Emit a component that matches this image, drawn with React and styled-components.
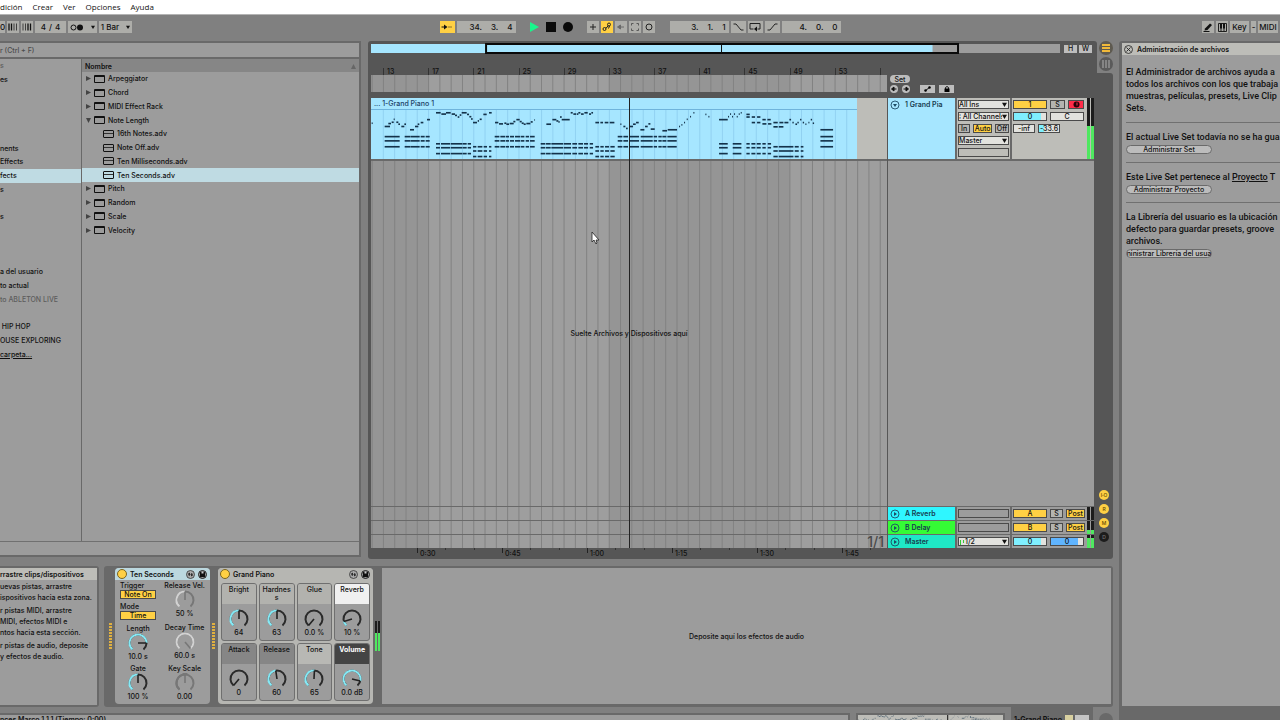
import React, { useState } from "react";
import styled, { createGlobalStyle, css } from "styled-components";

const GlobalStyle = createGlobalStyle`
  * {
    box-sizing: border-box;
  }
  html, body, #root {
    height: 100%;
  }
  body {
    margin: 0;
    overflow: hidden;
    background: #808080;
    color: #111;
    font-family: Inter, "Liberation Sans", sans-serif;
    font-size: 7px;
    font-weight: 500;
  }
  button, input, select {
    font: inherit;
    color: inherit;
    margin: 0;
    padding: 0;
    border: 0;
    border-radius: 0;
    background: none;
  }
  svg {
    display: block;
    flex: none;
  }
`;

const PANEL = "#9c9c9c";
const EDGE = "#696969";
const DARK = "#565656";
const LIGHT = "#bdbdb8";
const YELLOW = "#ffd044";
const BLUE = "#a6e6ff";
const CYAN = "#7fefff";
const WHITE = "#e2e2de";

/* ---------- timeline scale ---------- */

const VIEW_START = 11.9;
const VIEW_BARS = 45.7;
const pos = (bar) => ((bar - VIEW_START) / VIEW_BARS) * 100;
const PLAYHEAD = 34.75;

/* ---------- shell ---------- */

const Shell = styled.div`
  height: 100vh;
  display: flex;
  flex-direction: column;
`;

const Menu = styled.nav`
  height: 15px;
  flex: none;
  display: flex;
  align-items: center;
  gap: 10px;
  padding-bottom: 1px;
  background: #fff;
  border-bottom: 1px solid #b4b4b4;
  font-family: "Open Sans", "Noto Sans", sans-serif;
  font-size: 8px;
  font-weight: 400;
`;

const Body = styled.div`
  flex: 1;
  min-height: 0;
  display: flex;
`;

const Work = styled.main`
  flex: 1;
  min-width: 0;
  display: flex;
  flex-direction: column;
`;

const Upper = styled.div`
  flex: 1;
  min-height: 0;
  display: flex;
  gap: 7px;
  padding-right: 6px;
`;

/* ---------- toolbar ---------- */

const Toolbar = styled.header`
  height: 26px;
  flex: none;
  display: grid;
  grid-template-columns: 1fr auto 1fr;
  align-items: center;
  padding-bottom: 2px;
`;

const Tools = styled.div`
  display: flex;
  gap: 2px;
  justify-content: ${(props) => (props.$end ? "flex-end" : "flex-start")};
`;

const Tool = styled.button`
  width: ${(props) => props.$w || 12}px;
  height: 12px;
  display: flex;
  align-items: center;
  justify-content: center;
  gap: 3px;
  white-space: nowrap;
  font-size: 8px;
  background: ${(props) => (props.$on ? YELLOW : props.$bare ? "none" : "#adada9")};
`;

const Counter = styled.output`
  width: 59px;
  height: 12px;
  display: flex;
  align-items: center;
  justify-content: flex-end;
  gap: 9px;
  padding-right: 3px;
  font-size: 8px;
  background: #adada9;
`;

const Spacer = styled.span`
  width: ${(props) => props.$w}px;
`;

/* ---------- browser ---------- */

const Browser = styled.section`
  width: 361px;
  flex: none;
  margin-bottom: 2px;
  display: flex;
  flex-direction: column;
  background: ${PANEL};
  border: 2px solid ${EDGE};
  border-left: 0;
`;

const Search = styled.input`
  width: 100%;
  height: 14px;
  font-size: 7px;
  color: #555;
  &::placeholder {
    color: #4c4c4c;
    opacity: 1;
  }
`;

const BrowserBody = styled.div`
  flex: 1;
  display: flex;
  border-top: 2px solid ${EDGE};
`;

const BrowserFoot = styled.div`
  height: 14px;
  border-top: 1px solid #707070;
`;

const Places = styled.ul`
  width: 81px;
  height: 302px;
  margin: 0;
  padding: 0;
  display: grid;
  grid-template-rows: repeat(22, 1fr);
  list-style: none;
`;

const Place = styled.li`
  display: flex;
  align-items: center;
  white-space: nowrap;
  color: ${(props) => (props.$dim ? "#5c5c5c" : "#111")};
  background: ${(props) => (props.$on ? "#bfdbe3" : "none")};
  text-decoration: ${(props) => (props.$link ? "underline" : "none")};
`;

const Files = styled.div`
  flex: 1;
  border-left: 1px solid ${EDGE};
`;

const FilesHead = styled.div`
  height: 13px;
  padding: 1px 3px 0;
  display: flex;
  align-items: center;
  justify-content: space-between;
  font-weight: 600;
  background: #868686;
`;

const FileList = styled.ul`
  height: 165px;
  margin: 0;
  padding: 0;
  display: grid;
  grid-template-rows: repeat(12, 1fr);
  list-style: none;
`;

const FileRow = styled.li`
  display: flex;
  align-items: center;
  gap: 3px;
  padding-left: ${(props) => (props.$child ? 21 : 4)}px;
  background: ${(props) => (props.$on ? "#bfdbe3" : "none")};
`;

const FileIcon = styled.span`
  width: 11px;
  height: 8px;
  border: 1px solid #111;
  border-top-width: ${(props) => (props.$child ? 1 : 2)}px;
  border-radius: 1px;
  ${(props) =>
    props.$child &&
    css`
      &::after {
        content: "";
        display: block;
        height: 2px;
        border-bottom: 1px solid #333;
      }
    `}
`;

/* ---------- arrangement ---------- */

const Arrange = styled.section`
  flex: 1;
  min-width: 0;
  display: flex;
`;

const ArrMain = styled.div`
  flex: 1;
  min-width: 0;
  padding: 2px 3px 0;
  display: flex;
  flex-direction: column;
  background: ${DARK};
  border-radius: 3px 3px 0 3px;
`;

const OverviewRow = styled.div`
  height: 11px;
  display: flex;
  align-items: center;
  gap: 2px;
  padding-right: 2px;
`;

const Overview = styled.div`
  flex: 1;
  height: 11px;
  margin-right: 2px;
`;

const SmallBtn = styled.button`
  width: ${(props) => props.$w || 13}px;
  height: 8px;
  display: flex;
  align-items: center;
  justify-content: center;
  font-size: 7px;
  background: #bdbdbd;
`;

const Split = styled.div`
  display: flex;
  flex: ${(props) => (props.$grow ? 1 : "none")};
  min-height: 0;
`;

const TimeCol = styled.div`
  flex: 1;
  min-width: 0;
  position: relative;
  display: flex;
  flex-direction: column;
`;

const HeadCol = styled.div`
  width: 207px;
  flex: none;
  display: flex;
  flex-direction: column;
  border-left: 1px solid ${DARK};
`;

const Ruler = styled.div`
  height: 21px;
  display: flex;
  align-items: flex-end;
  overflow: hidden;
  padding-left: 12px;
`;

const Mark = styled.span`
  flex: none;
  height: 7px;
  padding-left: 3px;
  border-left: 1px solid #333;
  line-height: 7px;
`;

const Scrub = styled.div`
  position: relative;
  height: 17px;
  margin-bottom: 6px;
  background: ${PANEL};
`;

const SetTools = styled.div`
  height: 44px;
  padding: 21px 2px 0;
  display: flex;
  flex-direction: column;
  align-items: flex-start;
  gap: 2px;
`;

const Pill = styled.button`
  width: ${(props) => props.$w}px;
  height: ${(props) => props.$h || 9}px;
  display: flex;
  align-items: center;
  justify-content: center;
  overflow: hidden;
  white-space: nowrap;
  font-family: Inter, "Liberation Sans", sans-serif;
  font-size: 7px;
  border-radius: 5px;
  border: ${(props) => (props.$line ? "1px solid #6a6a6a" : 0)};
  background: #bcbcbc;
`;

const SetRow = styled.div`
  display: flex;
  gap: 4px;
`;

const Round = styled.button`
  width: 8px;
  height: 8px;
  border-radius: 50%;
  background: #bdbdbd;
`;

const GridBack = styled.svg`
  position: absolute;
  inset: 0;
  width: 100%;
  height: 100%;
`;

const Playhead = styled.span`
  position: absolute;
  top: 0;
  bottom: 0;
  width: 1px;
  background: #222;
`;

const Pointer = styled.svg`
  position: absolute;
  top: 133px;
`;

const TrackLane = styled.div`
  position: relative;
  height: 63px;
  flex: none;
  display: flex;
  background: ${LIGHT};
  border-bottom: 2px solid ${EDGE};
`;

const Clip = styled.article`
  display: flex;
  flex-direction: column;
  background: ${BLUE};
`;

const ClipName = styled.div`
  height: 12px;
  flex: none;
  padding-left: 3px;
  line-height: 12px;
  color: #203e66;
  border-bottom: 1px solid #6fb4dc;
`;

const ClipNotes = styled.svg`
  width: 100%;
  height: 49px;
`;

const DropLane = styled.div`
  position: relative;
  flex: 1;
  display: flex;
  align-items: center;
  justify-content: center;
`;

const ReturnLane = styled.div`
  position: relative;
  height: 14px;
  flex: none;
  display: flex;
  align-items: center;
  justify-content: flex-end;
  padding-right: 3px;
  border-top: 1px solid ${EDGE};
  font-size: 14px;
  line-height: 12px;
  font-weight: 500;
  color: #4a4a4a;
`;

const Times = styled.div`
  height: 11px;
  display: flex;
  padding-left: 46px;
  overflow: hidden;
`;

const TimeMark = styled.span`
  flex: none;
  height: 5px;
  padding-left: 2px;
  line-height: 12px;
  border-left: 1px solid #222;
  background:
    linear-gradient(#333, #333) 33% 0 / 1px 2px no-repeat,
    linear-gradient(#333, #333) 67% 0 / 1px 2px no-repeat;
`;

const TrackRow = styled.div`
  height: ${(props) => (props.$tall ? 63 : 14)}px;
  flex: none;
  display: grid;
  grid-template-columns: 67px 53px 1fr;
  column-gap: 2px;
  background: ${EDGE};
  border-bottom: ${(props) => (props.$tall ? `2px solid ${EDGE}` : 0)};
  border-top: ${(props) => (props.$tall ? 0 : `1px solid ${EDGE}`)};
`;

const TrackName = styled.div`
  display: flex;
  align-items: ${(props) => (props.$top ? "flex-start" : "center")};
  gap: 5px;
  padding: ${(props) => (props.$top ? 2 : 0)}px 2px;
  line-height: 9px;
  font-weight: 600;
  white-space: nowrap;
  color: #173c50;
  background: ${(props) => props.$bg};
`;

const Cells = styled.div`
  display: flex;
  flex-direction: column;
  gap: 3px;
  padding: 2px 1px;
  background: ${(props) => (props.$tall ? LIGHT : PANEL)};
`;

const CellRow = styled.div`
  display: flex;
  gap: 3px;
`;

const cell = css`
  height: 9px;
  display: flex;
  align-items: center;
  justify-content: center;
  border: 1px solid #4a4a4a;
  font-size: 7px;
  line-height: 7px;
`;

const Cell = styled.button`
  ${cell}
  width: ${(props) => props.$w}px;
  background: ${(props) => props.$bg || "#b4b4b0"};
`;

const Field = styled.input`
  ${cell}
  width: ${(props) => props.$w}px;
  text-align: center;
  background: ${(props) =>
    props.$fill ? `linear-gradient(to right, ${props.$tint || CYAN} ${props.$fill}%, ${WHITE} 0)` : WHITE};
`;

const Blank = styled.span`
  ${cell}
`;

const Chooser = styled.label`
  ${cell}
  padding-right: 1px;
  background: ${WHITE};
  select {
    flex: 1;
    min-width: 0;
    appearance: none;
    outline: 0;
  }
`;

const Mixer = styled.div`
  display: flex;
  justify-content: space-between;
  background: ${(props) => (props.$tall ? LIGHT : PANEL)};
`;

const Meter = styled.span`
  width: 7px;
  display: flex;
  gap: 1px;
  i {
    flex: 1;
    background: linear-gradient(to top, #4fe860 ${(props) => props.$level}%, #1c1c1c 0);
  }
`;

const RackMeter = styled(Meter)`
  width: 5px;
  height: 30px;
  align-self: center;
`;

const HeadFill = styled.div`
  flex: 1;
  background: ${PANEL};
`;

const Side = styled.div`
  width: 16px;
  flex: none;
  display: flex;
  flex-direction: column;
`;

const SideTop = styled.div`
  height: 32px;
  display: flex;
  flex-direction: column;
  align-items: center;
  gap: 2px;
  padding-left: 2px;
`;

const SideRest = styled.div`
  flex: 1;
  display: flex;
  flex-direction: column;
  justify-content: flex-end;
  gap: 4px;
  padding: 0 2px 17px;
  background: ${DARK};
  border-radius: 0 3px 3px 0;
`;

const Dot = styled.button`
  width: 10px;
  height: 10px;
  font-size: 5px;
  line-height: 10px;
  border-radius: 50%;
  color: ${(props) => (props.$off ? "#777" : "#5f4700")};
  background: ${(props) => (props.$off ? "#1c1c1c" : YELLOW)};
`;

/* ---------- help panel ---------- */

const Help = styled.aside`
  width: 161px;
  flex: none;
  display: flex;
  flex-direction: column;
  background: ${EDGE};
  padding: 2px 0 14px 3px;
  border-radius: 3px 0 0 0;
`;

const HelpHead = styled.div`
  height: 12px;
  flex: none;
  display: flex;
  align-items: center;
  gap: 4px;
  padding-left: 2px;
  font-weight: 600;
  background: ${LIGHT};
`;

const HelpBody = styled.div`
  flex: 1;
  padding: 11px 0 0 4px;
  overflow: hidden;
  background: ${PANEL};
`;

const HelpBlock = styled.div`
  padding-bottom: 8px;
  margin-bottom: 8px;
  border-bottom: ${(props) => (props.$last ? 0 : "1px solid #707070")};
  font-family: Roboto, "Liberation Sans", sans-serif;
  font-size: 9px;
  line-height: 12px;
  white-space: nowrap;
  a {
    color: inherit;
  }
  button {
    margin-top: 2px;
  }
`;

/* ---------- devices ---------- */

const Lower = styled.div`
  height: 141px;
  flex: none;
  margin-top: 7px;
  padding-right: 6px;
  display: flex;
  gap: 5px;
`;

const Info = styled.section`
  width: 99px;
  flex: none;
  border: 2px solid ${EDGE};
  border-left: 0;
  border-radius: 0 3px 3px 0;
  background: ${PANEL};
  white-space: nowrap;
  h2 {
    margin: 0 0 1px;
    height: 12px;
    font-size: 7px;
    line-height: 13px;
    font-weight: 600;
    background: ${LIGHT};
  }
  p {
    margin: 0 0 2px;
    line-height: 11px;
  }
`;

const Chain = styled.section`
  flex: 1;
  min-width: 0;
  display: flex;
  align-items: stretch;
  gap: 2px;
  padding: 2px 2px 3px 5px;
  border-radius: 3px;
  background: ${EDGE};
`;

const Dots = styled.span`
  width: 4px;
  height: 26px;
  align-self: center;
  border: 0 solid ${EDGE};
  border-right-width: 1px;
  background: repeating-linear-gradient(to bottom, #e0b040 0 2px, ${EDGE} 2px 3px);
`;

const Device = styled.article`
  width: ${(props) => props.$w}px;
  flex: none;
  display: flex;
  flex-direction: column;
  border-radius: 4px;
  overflow: hidden;
  background: ${(props) => (props.$rack ? "#b6b6b2" : PANEL)};
`;

const DeviceHead = styled.div`
  height: 12px;
  flex: none;
  display: flex;
  align-items: center;
  gap: 3px;
  padding: 0 3px 0 2px;
  font-weight: 600;
  background: ${(props) => props.$bg};
  b {
    flex: 1;
    font-weight: 600;
  }
`;

const Power = styled.button`
  width: 10px;
  height: 10px;
  border-radius: 50%;
  border: 1px solid #7a6520;
  background: ${YELLOW};
`;

const DeviceBody = styled.div`
  flex: 1;
  display: flex;
  justify-content: space-between;
  padding: 2px 5px 3px 5px;
`;

const ParamCol = styled.div`
  display: flex;
  flex-direction: column;
  align-items: center;
  justify-content: space-between;
`;

const Switch = styled.div`
  width: 36px;
  line-height: 8px;
`;

const KnobBox = styled.label`
  position: relative;
  display: flex;
  flex-direction: column;
  align-items: center;
  line-height: 8px;
  white-space: nowrap;
  input {
    position: absolute;
    inset: 0;
    width: 100%;
    opacity: 0;
  }
`;

const Macros = styled.div`
  flex: 1;
  display: grid;
  grid-template-columns: repeat(4, 1fr);
  grid-template-rows: 1fr 1fr;
  gap: 2px;
  padding: 3px;
`;

const Macro = styled.div`
  display: flex;
  flex-direction: column;
  overflow: hidden;
  border: 1px solid #6f6f6f;
  border-radius: 3px;
  background: ${PANEL};
`;

const MacroName = styled.div`
  height: 20px;
  padding: 2px 2px 0;
  line-height: 8px;
  text-align: center;
  word-break: break-all;
  color: ${(props) => props.$fg || "#111"};
  font-weight: ${(props) => (props.$fg ? 700 : 500)};
  background: ${(props) => props.$bg};
`;

const MacroKnob = styled.div`
  flex: 1;
  display: flex;
  align-items: flex-end;
  justify-content: center;
  padding-bottom: 3px;
`;

const DropZone = styled.div`
  flex: 1;
  display: flex;
  align-items: center;
  justify-content: center;
  background: ${PANEL};
`;

/* ---------- status bar ---------- */

const Status = styled.footer`
  height: 13px;
  flex: none;
  display: flex;
  gap: 6px;
  overflow: hidden;
`;

const StatusText = styled.div`
  flex: 1;
  height: 20px;
  margin-top: 6px;
  font-weight: 600;
  line-height: 10px;
  border: 2px solid ${EDGE};
  border-left: 0;
  background: ${PANEL};
`;

const MiniClip = styled.svg`
  width: 149px;
  height: 20px;
  margin-top: 6px;
  border: 2px solid ${EDGE};
  background: ${LIGHT};
`;

const MiniTab = styled.div`
  width: 82px;
  height: 20px;
  padding: 8px 4px 0 3px;
  display: flex;
  align-items: flex-start;
  justify-content: space-between;
  font-size: 7px;
  font-weight: 700;
  white-space: nowrap;
  background: ${EDGE};
`;

const MiniRound = styled.span`
  width: 14px;
  height: 14px;
  margin: 6px 6px 0 0;
  border-radius: 50%;
  background: ${EDGE};
`;

/* ---------- data ---------- */

const places = [
  ["s", 1, { dim: true }],
  ["es", 2],
  ["nents", 7],
  ["Effects", 8],
  ["fects", 9, { on: true }],
  ["s", 10],
  ["s", 12],
  ["a del usuario", 16],
  ["to actual", 17],
  ["to ABLETON LIVE", 18, { dim: true }],
  ["\u00a0HIP HOP", 20],
  ["OUSE EXPLORING", 21],
  ["carpeta...", 22, { link: true }],
];

const files = [
  { name: "Arpeggiator" },
  { name: "Chord" },
  { name: "MIDI Effect Rack" },
  { name: "Note Length", open: true },
  { name: "16th Notes.adv", child: true },
  { name: "Note Off.adv", child: true },
  { name: "Ten Milliseconds.adv", child: true },
  { name: "Ten Seconds.adv", child: true, on: true },
  { name: "Pitch" },
  { name: "Random" },
  { name: "Scale" },
  { name: "Velocity" },
];

// single notes: x, y, length
const melody = [
  [20, 370, 3], [59, 380, 16], [70, 371, 8], [80, 367, 6], [86, 358, 3], [94, 367, 6], [100, 373, 5],
  [109, 380, 9], [118, 373, 5], [135, 390, 12], [150, 380, 10], [158, 373, 5], [167, 368, 8], [186, 359, 9],
  [213, 338, 14], [229, 342, 14], [243, 338, 14], [260, 342, 10], [270, 346, 6], [278, 351, 5], [284, 345, 5],
  [290, 338, 15], [306, 343, 6], [313, 350, 6], [318, 357, 5], [324, 368, 12], [338, 363, 4], [344, 358, 6],
  [355, 343, 10], [372, 338, 8], [390, 368, 10], [402, 372, 12], [418, 370, 6], [424, 373, 8], [434, 371, 12],
  [445, 365, 6], [454, 359, 10], [464, 365, 6], [470, 370, 6], [476, 373, 6], [484, 371, 12], [497, 366, 6],
  [508, 360, 2], [544, 373, 14], [562, 359, 12], [574, 363, 6], [580, 366, 4], [585, 351, 5], [590, 359, 24],
  [617, 338, 6], [625, 342, 8], [635, 342, 5], [640, 338, 6], [648, 342, 8], [658, 338, 10], [672, 342, 6],
  [679, 338, 5], [691, 368, 11], [706, 368, 8], [719, 368, 11], [734, 368, 14], [766, 373, 3], [775, 380, 6],
  [783, 386, 5], [792, 380, 12], [804, 373, 8], [813, 368, 8], [826, 390, 12], [840, 380, 8], [850, 372, 6],
  [857, 388, 12], [892, 393, 14], [908, 390, 28], [942, 380, 3], [949, 375, 3], [957, 368, 3], [965, 358, 3],
  [975, 350, 3], [985, 338, 3], [1021, 343, 3], [1030, 350, 3], [1062, 359, 26], [1089, 350, 3], [1095, 342, 3],
  [1101, 350, 3], [1107, 342, 3], [1115, 350, 3], [1121, 342, 3], [1127, 338, 3], [1144, 343, 10], [1144, 351, 10],
  [1160, 351, 10], [1176, 351, 10], [1160, 368, 10], [1176, 368, 10], [1192, 359, 10], [1207, 359, 10],
  [1192, 372, 12], [1209, 372, 10], [1225, 368, 13], [1243, 368, 12], [1258, 368, 12], [1225, 381, 13],
  [1241, 381, 14], [1273, 359, 5], [1282, 368, 4], [1291, 373, 5], [1297, 368, 4], [1305, 359, 4], [1313, 368, 4],
  [1321, 373, 3], [1330, 368, 3], [1337, 359, 4], [1343, 370, 4],
];

// stacked notes: rows of y, then x and length
const chords = [
  [[411, 424, 442], [[59, 45], [119, 16], [136, 28], [167, 12], [182, 12], [389, 14], [406, 14], [422, 10],
    [435, 12], [450, 16], [468, 10], [482, 10], [495, 14], [758, 14], [775, 14], [792, 30], [827, 36], [866, 10],
    [880, 10], [892, 12], [907, 28]]],
  [[433, 445, 463], [[213, 12], [228, 28], [258, 34], [293, 12], [308, 10], [527, 14], [543, 14], [559, 35],
    [596, 22], [622, 14], [640, 14], [657, 12], [674, 10], [1062, 26], [1103, 26], [1144, 10], [1159, 12],
    [1175, 12], [1192, 10], [1208, 10]]],
  [[442, 455, 472], [[324, 10], [338, 14], [356, 10], [372, 7], [691, 11], [706, 10], [720, 12], [736, 13],
    [1225, 13], [1241, 44], [1289, 12], [1307, 8]]],
  [[390, 411, 424, 442], [[1366, 38]]],
];

const notes = [
  ...melody,
  ...chords.flatMap(([ys, segs]) => ys.flatMap((y) => segs.map(([x, w]) => [x, y, w]))),
];

/* ---------- parts ---------- */

const Caret = ({ size = 5 }) => (
  <svg width={size} height={size} viewBox="0 0 6 6">
    <path d="M0 1h6L3 6z" fill="#111" />
  </svg>
);

const Notes = () => (
  <g fill="#14324a">
    {notes.map(([x, y, w], i) => (
      <rect key={i} x={x} y={y - 2} width={w} height="5" />
    ))}
  </g>
);

const Grid = () => {
  const bars = Array.from({ length: 46 }, (_, i) => 12 + i);
  return (
    <GridBack>
      <rect width="100%" height="100%" fill="#959595" />
      <rect x={`${pos(17)}%`} width={`${pos(33) - pos(17)}%`} height="100%" fill="#9e9e9e" />
      <rect x={`${pos(49)}%`} width={`${100 - pos(49)}%`} height="100%" fill="#9e9e9e" />
      {bars.map((bar) => (
        <line key={bar} x1={`${pos(bar)}%`} x2={`${pos(bar)}%`} y1="0" y2="100%" stroke="#828282" />
      ))}
    </GridBack>
  );
};

const polar = (deg, r) => {
  const a = ((deg - 90) * Math.PI) / 180;
  return `${10 + r * Math.cos(a)} ${10 + r * Math.sin(a)}`;
};

const arc = (from, to) =>
  `M${polar(from, 8.5)}A8.5 8.5 0 ${to - from > 180 ? 1 : 0} 1 ${polar(to, 8.5)}`;

const Knob = ({ name, label, value, text, on = "#86e9f5", rest = "#2b2b2b", needle = "#222", top }) => {
  const angle = -140 + value * 280;
  return (
    <KnobBox>
      {label && <span>{label}</span>}
      <svg width="20" height="20" viewBox="0 0 20 20" fill="none" strokeWidth="2">
        <path d={arc(-140, 140)} stroke={rest} />
        {value > 0 && <path d={arc(-140, angle)} stroke={on} />}
        <path d={`M10 10L${polar(angle, 8.5)}`} stroke={needle} strokeWidth="1.6" />
        {top && <path d="M7 0h6l-3 3z" fill="#777" />}
      </svg>
      <span>{text}</span>
      <input type="range" min="0" max="1" step="0.01" defaultValue={value} aria-label={name || label} />
    </KnobBox>
  );
};

const Select = ({ label, value, children }) => (
  <Chooser>
    {children}
    <select aria-label={label}>
      <option>{value}</option>
    </select>
    <Caret />
  </Chooser>
);

const HeadIcons = () => (
  <>
    <svg width="9" height="9" viewBox="0 0 18 18">
      <circle cx="9" cy="9" r="8" fill="#aaa" stroke="#333" strokeWidth="1.6" />
      <path d="M3.500 9l3-4 2.500 4zM14.500 9l-3 4L9 9z" fill="#111" />
      <path d="M6.500 8v4M11.500 10V6" stroke="#111" strokeWidth="1.600" />
    </svg>
    <svg width="9" height="9" viewBox="0 0 18 18">
      <circle cx="9" cy="9" r="8" fill="#999" stroke="#222" strokeWidth="2" />
      <path d="M4 4h10v10H4z" fill="#111" />
      <path d="M7 4h4v3H7z" fill="#ccc" />
    </svg>
  </>
);

const Fold = ({ down }) => (
  <svg width="10" height="10" viewBox="0 0 20 20">
    <circle cx="10" cy="10" r="8" fill="none" stroke="#1d4c66" strokeWidth="1.8" />
    <path d={down ? "M6 8h8l-4 6z" : "M8 6v8l6-4z"} fill="#1d4c66" />
  </svg>
);

const Beats = ({ bold }) => (
  <svg width="10" height="8" viewBox="0 0 20 16">
    {[2, 7, 12, 17].map((x, i) => (
      <path key={x} d={`M${x} 1v14`} stroke="#111" strokeWidth={(bold ? i > 1 : i < 2) ? 2.6 : 1.4} />
    ))}
  </svg>
);

const Count = ({ label, parts }) => (
  <Counter aria-label={label}>
    {parts.map((p, i) => (
      <span key={i}>{p}</span>
    ))}
  </Counter>
);

const Bar = () => (
  <Toolbar>
    <Tools>
      <Tool $w={5}>0</Tool>
      <Tool aria-label="Nudge down"><Beats /></Tool>
      <Tool aria-label="Nudge up"><Beats bold /></Tool>
      <Tool $w={31}><span>4</span><span>/</span><span>4</span></Tool>
      <Tool $w={29} aria-label="Metronome">
        <svg width="13" height="7" viewBox="0 0 26 14">
          <circle cx="7" cy="7" r="5" fill="none" stroke="#111" strokeWidth="2" />
          <circle cx="20" cy="7" r="6" fill="#111" />
        </svg>
        <Spacer $w={2} />
        <Caret size={4} />
      </Tool>
      <Tool $w={33}>
        1 Bar <Spacer $w={1} /><Caret size={4} />
      </Tool>
    </Tools>
    <Tools>
      <Tool $on $w={15} aria-label="Follow">
        <svg width="12" height="8" viewBox="0 0 24 16">
          <path d="M1 8h6" stroke="#111" strokeWidth="2" />
          <path d="M6 3l7 5-7 5z" fill="#111" />
          <path d="M15 8h2M19 8h2" stroke="#111" strokeWidth="2" />
        </svg>
      </Tool>
      <Count label="Position" parts={["34.", "3.", "4"]} />
      <Spacer $w={9} />
      <Tool $bare aria-label="Play">
        <svg width="11" height="12" viewBox="0 0 11 12"><path d="M1 1v10l9-5z" fill="#19f58c" /></svg>
      </Tool>
      <Spacer $w={0} />
      <Tool $bare aria-label="Stop">
        <svg width="10" height="10"><rect width="10" height="10" fill="#0a0a0a" /></svg>
      </Tool>
      <Spacer $w={1} />
      <Tool $bare aria-label="Record">
        <svg width="10" height="10"><circle cx="5" cy="5" r="5" fill="#0a0a0a" /></svg>
      </Tool>
      <Spacer $w={9} />
      <Tool aria-label="Overdub">
        <svg width="8" height="8" viewBox="0 0 8 8"><path d="M4 1v6M1 4h6" stroke="#222" /></svg>
      </Tool>
      <Tool $on aria-label="Automation arm">
        <svg width="10" height="10" viewBox="0 0 20 20" fill="none" stroke="#222" strokeWidth="2">
          <circle cx="5" cy="14" r="3" />
          <circle cx="14" cy="5" r="3" />
          <path d="M7 12l3-1 2-4M15 8l-2 5" />
        </svg>
      </Tool>
      <Tool aria-label="Re-enable automation">
        <svg width="8" height="8" viewBox="0 0 16 16"><path d="M1 8l6-4v8zM7 8h7" stroke="#6a6a6a" strokeWidth="2" fill="#6a6a6a" /></svg>
      </Tool>
      <Tool aria-label="Capture">
        <svg width="8" height="8" viewBox="0 0 16 16" fill="none" stroke="#444" strokeWidth="1.6">
          <path d="M1 5V1h4M11 1h4v4M15 11v4h-4M5 15H1v-4" />
        </svg>
      </Tool>
      <Tool aria-label="Session record">
        <svg width="8" height="8" viewBox="0 0 8 8"><circle cx="4" cy="4" r="3" fill="none" stroke="#222" /></svg>
      </Tool>
      <Spacer $w={11} />
      <Count label="Loop start" parts={["3.", "1.", "1"]} />
      <Tool $w={15} aria-label="Punch in">
        <svg width="11" height="8" viewBox="0 0 22 16"><path d="M1 2h5l10 12h5" fill="none" stroke="#222" strokeWidth="2" /></svg>
      </Tool>
      <Tool $w={15} aria-label="Loop">
        <svg width="12" height="10" viewBox="0 0 24 20">
          <path d="M9 14H2V3h20v11h-5" fill="none" stroke="#222" strokeWidth="2" />
          <path d="M10 14l6-5v10z" fill="#111" />
        </svg>
      </Tool>
      <Tool $w={15} aria-label="Punch out">
        <svg width="11" height="8" viewBox="0 0 22 16"><path d="M1 14h5L16 2h5" fill="none" stroke="#222" strokeWidth="2" /></svg>
      </Tool>
      <Count label="Loop length" parts={["4.", "0.", "0"]} />
    </Tools>
    <Tools $end>
      <Tool aria-label="Draw mode">
        <svg width="10" height="9" viewBox="0 0 20 18">
          <path d="M4 11L14 1l4 3-9 10-6 1z" fill="#111" />
          <path d="M1 17h12" stroke="#111" strokeWidth="2" />
        </svg>
      </Tool>
      <Tool aria-label="Computer keyboard">
        <svg width="9" height="9" viewBox="0 0 18 18" fill="none" stroke="#111">
          <path d="M1 1h16v16H1zM6 9v8M12 9v8" strokeWidth="1.800" />
          <path d="M6 1v10M12 1v10" strokeWidth="4" />
        </svg>
      </Tool>
      <Tool $w={19}>Key</Tool>
      <Tool $w={5} aria-label="Key activity">-</Tool>
      <Tool $w={20}>MIDI</Tool>
      <Spacer $w={0} />
    </Tools>
  </Toolbar>
);

const FileBrowser = () => (
  <Browser>
    <Search type="search" aria-label="Buscar" placeholder="r (Ctrl + F)" />
    <BrowserBody>
      <Places>
        {places.map(([text, row, o = {}]) => (
          <Place key={row} style={{ gridRow: row }} $dim={o.dim} $on={o.on} $link={o.link}>
            {text}
          </Place>
        ))}
      </Places>
      <Files>
        <FilesHead>
          Nombre
          <svg width="5" height="5" viewBox="0 0 6 6"><path d="M0 6h6L3 0z" fill="#666" /></svg>
        </FilesHead>
        <FileList>
          {files.map((f) => (
            <FileRow key={f.name} $child={f.child} $on={f.on}>
              {!f.child && (
                <svg width="5" height="5" viewBox="0 0 6 6">
                  <path d={f.open ? "M0 0h6L3 6z" : "M0 0v6l6-3z"} fill="#444" />
                </svg>
              )}
              <FileIcon $child={f.child} />
              {f.name}
            </FileRow>
          ))}
        </FileList>
      </Files>
    </BrowserBody>
    <BrowserFoot />
  </Browser>
);

const SetControls = () => (
  <SetTools>
    <Pill $w={20} $h={8}>Set</Pill>
    <SetRow>
      <Round aria-label="Previous locator">
        <svg width="8" height="8" viewBox="0 0 16 16"><path d="M3 8l5-4v8zM8 8h5" fill="#111" stroke="#111" strokeWidth="2" /></svg>
      </Round>
      <Round aria-label="Next locator">
        <svg width="8" height="8" viewBox="0 0 16 16"><path d="M13 8L8 4v8zM3 8h5" fill="#111" stroke="#111" strokeWidth="2" /></svg>
      </Round>
      <Spacer $w={2} />
      <SmallBtn $w={15} aria-label="Automation mode">
        <svg width="7" height="6" viewBox="0 0 14 12"><path d="M2 10L12 2" stroke="#111" strokeWidth="2" /><circle cx="3" cy="9" r="2.500" /><circle cx="11" cy="3" r="2.500" /></svg>
      </SmallBtn>
      <SmallBtn $w={15} aria-label="Lock envelopes">
        <svg width="6" height="6" viewBox="0 0 12 12"><path d="M1 5h10v7H1z" /><path d="M3 6V3q3-4 6 0v3" fill="none" stroke="#111" strokeWidth="2" /></svg>
      </SmallBtn>
    </SetRow>
  </SetTools>
);

const ReturnRow = ({ name, letter, color, level }) => (
  <TrackRow>
    <TrackName $bg={color}><Fold />{name}</TrackName>
    <Cells><Blank /></Cells>
    <Mixer>
      <Cells>
        <CellRow>
          <Cell $w={34} $bg={YELLOW}>{letter}</Cell>
          <Cell $w={13}>S</Cell>
          <Cell $w={19} $bg={YELLOW}>Post</Cell>
        </CellRow>
      </Cells>
      <Meter $level={level}><i /><i /></Meter>
    </Mixer>
  </TrackRow>
);

const TrackHeads = () => (
  <HeadCol>
    <TrackRow $tall>
      <TrackName $top $bg={BLUE}><Fold down />1 Grand Pia</TrackName>
      <Cells $tall>
        <Select label="Input type" value="All Ins" />
        <Select label="Input channel" value="⁞ All Channels" />
        <CellRow>
          <Cell $w={13}>In</Cell>
          <Cell $w={20} $bg={YELLOW}>Auto</Cell>
          <Cell $w={15}>Off</Cell>
        </CellRow>
        <Select label="Output" value="Master" />
        <Blank />
      </Cells>
      <Mixer $tall>
        <Cells $tall>
          <CellRow>
            <Cell $w={34} $bg={YELLOW}>1</Cell>
            <Cell $w={15}>S</Cell>
            <Cell $w={16} $bg="#ff2b48" aria-label="Arm">
              <svg width="7" height="7" viewBox="0 0 14 14"><circle cx="7" cy="7" r="6" fill="#2a0008" /><path d="M8 3v6" stroke="#ff2b48" strokeWidth="2" /></svg>
            </Cell>
          </CellRow>
          <CellRow>
            <Field $w={34} $fill={85} aria-label="Volume" defaultValue="0" />
            <Field $w={34} aria-label="Pan" defaultValue="C" />
          </CellRow>
          <CellRow>
            <Field $w={22} aria-label="Send A" defaultValue="-inf" />
            <Field $w={22} $fill={25} aria-label="Send B" defaultValue="-33.6" />
          </CellRow>
        </Cells>
        <Meter $level={54}><i /><i /></Meter>
      </Mixer>
    </TrackRow>
    <HeadFill />
    <ReturnRow name="A Reverb" letter="A" color="#2ff6ff" level={0} />
    <ReturnRow name="B Delay" letter="B" color="#35fb35" level={30} />
    <TrackRow>
      <TrackName $bg="#1fe8c6"><Fold />Master</TrackName>
      <Cells>
        <Select label="Cue out" value="1/2">
          <svg width="6" height="6" viewBox="0 0 6 6"><path d="M1 1h1v5H1zM4 1h1v3H4z" fill="#38c838" /></svg>
        </Select>
      </Cells>
      <Mixer>
        <Cells>
          <CellRow>
            <Field $w={34} $fill={85} aria-label="Master volume" defaultValue="0" />
            <Field $w={34} $fill={85} $tint="#5fb4ff" aria-label="Cue volume" defaultValue="0" />
          </CellRow>
        </Cells>
        <Meter $level={75}><i /><i /></Meter>
      </Mixer>
    </TrackRow>
  </HeadCol>
);

const Arrangement = () => (
  <Arrange>
    <ArrMain>
      <OverviewRow>
        <Overview>
          <svg width="100%" height="11">
            <rect y="1" width="100%" height="9" fill={PANEL} />
            <rect y="1" width="81.500%" height="9" fill={BLUE} />
            <svg x="16.700%" width="68.500%" height="11" overflow="visible">
              <rect y="1" width="100%" height="9" fill="none" stroke="#0a0a0a" strokeWidth="2" />
            </svg>
            <rect x="50.800%" y="1" width="1" height="9" fill="#111" />
          </svg>
        </Overview>
        <SmallBtn>H</SmallBtn>
        <SmallBtn>W</SmallBtn>
      </OverviewRow>
      <Split>
        <TimeCol>
          <Ruler>
            {[13, 17, 21, 25, 29, 33, 37, 41, 45, 49, 53, ""].map((bar) => (
              <Mark key={bar} style={{ width: `${(4 / VIEW_BARS) * 102.4}%` }}>{bar}</Mark>
            ))}
          </Ruler>
          <Scrub><Grid /></Scrub>
        </TimeCol>
        <HeadCol><SetControls /></HeadCol>
      </Split>
      <Split $grow>
        <TimeCol>
          <Grid />
          <TrackLane>
            <Clip style={{ width: `${pos(54.95)}%` }}>
              <ClipName>... 1-Grand Piano 1</ClipName>
              <ClipNotes viewBox="18 330 1458 150" preserveAspectRatio="none">
                {Array.from({ length: 43 }, (_, i) => (
                  <path key={i} d={`M${55 + i * 33.9} 330v150`} stroke="#86c6ea" strokeWidth="2" />
                ))}
                <Notes />
              </ClipNotes>
            </Clip>
          </TrackLane>
          <DropLane>Suelte Archivos y Dispositivos aquí</DropLane>
          <ReturnLane />
          <ReturnLane />
          <ReturnLane>1/1</ReturnLane>
          <Playhead style={{ left: `${pos(PLAYHEAD)}%` }} />
          <Pointer style={{ left: `${pos(31.4)}%` }} width="9" height="13" viewBox="0 0 9 13">
            <path d="M1 1v10l2-2 2 4 1-1-1-3h3z" fill="#fff" stroke="#222" strokeWidth="0.800" />
          </Pointer>
        </TimeCol>
        <TrackHeads />
      </Split>
      <Split>
        <TimeCol>
          <Times>
            {["0:30", "0:45", "1:00", "1:15", "1:30", "1:45"].map((t) => (
              <TimeMark key={t} style={{ width: `${(85 / 470) * 100}%` }}>{t}</TimeMark>
            ))}
          </Times>
        </TimeCol>
        <HeadCol />
      </Split>
    </ArrMain>
    <Side>
      <SideTop>
        <svg width="14" height="14" viewBox="0 0 14 14">
          <circle cx="7" cy="7" r="7" fill="#5e5a50" />
          <path d="M3 4h8M3 7h8M3 10h8" stroke="#f0b93a" strokeWidth="2" />
        </svg>
        <svg width="14" height="14" viewBox="0 0 14 14">
          <circle cx="7" cy="7" r="7" fill="#5a5a5a" />
          <path d="M4 3v8M7 3v8M10 3v8" stroke="#8f8f8f" strokeWidth="1.600" />
        </svg>
      </SideTop>
      <SideRest>
        <Dot>I·O</Dot>
        <Dot>R</Dot>
        <Dot>M</Dot>
        <Dot $off>D</Dot>
      </SideRest>
    </Side>
  </Arrange>
);

const Devices = () => (
  <Lower>
    <Info>
      <h2>rrastre clips/dispositivos</h2>
      <p>uevas pistas, arrastre<br />ispositivos hacia esta zona.</p>
      <p>r pistas MIDI, arrastre<br />MIDI, efectos MIDI e<br />ntos hacia esta sección.</p>
      <p>r pistas de audio, deposite<br />y efectos de audio.</p>
    </Info>
    <Chain>
      <Dots />
      <Device $w={95}>
        <DeviceHead $bg="#bcd8df"><Power aria-label="Ten Seconds" /><b>Ten Seconds</b><HeadIcons /></DeviceHead>
        <DeviceBody>
          <ParamCol>
            <Switch>Trigger<Cell $w={36} $bg={YELLOW}>Note On</Cell></Switch>
            <Switch>Mode<Cell $w={36} $bg={YELLOW}>Time</Cell></Switch>
            <Knob label="Length" value={0.82} text="10.0 s" />
            <Knob label="Gate" value={0.5} text="100 %" />
          </ParamCol>
          <ParamCol>
            <Knob label="Release Vel." value={0.5} text="50 %" on="#d2d2d2" rest="#777" needle="#777" />
            <Knob label="Decay Time" value={1} text="60.0 s" on="#d2d2d2" rest="#777" needle="#777" />
            <Knob label="Key Scale" value={0.5} text="0.00" on="#777" rest="#777" needle="#777" top />
          </ParamCol>
        </DeviceBody>
      </Device>
      <Dots />
      <Device $w={155} $rack>
        <DeviceHead $bg="#b6b6b2"><Power aria-label="Grand Piano" /><b>Grand Piano</b><HeadIcons /></DeviceHead>
        <Macros>
          {[
            ["Bright", 0.5, "64", "#b2b2ae"],
            ["Hardness", 0.5, "63", "#b2b2ae"],
            ["Glue", 0, "0.0 %", "#b2b2ae"],
            ["Reverb", 0.12, "10 %", "#f0f0f0"],
            ["Attack", 0, "0", "#868686"],
            ["Release", 0.47, "60", "#868686"],
            ["Tone", 0.51, "65", "#b8b8b4"],
            ["Volume", 0.87, "0.0 dB", "#444", "#fff"],
          ].map(([name, value, text, bg, fg]) => (
            <Macro key={name}>
              <MacroName $bg={bg} $fg={fg}>{name}</MacroName>
              <MacroKnob><Knob name={name} value={value} text={text} /></MacroKnob>
            </Macro>
          ))}
        </Macros>
      </Device>
      <RackMeter $level={60}><i /><i /></RackMeter>
      <DropZone>Deposite aquí los efectos de audio</DropZone>
    </Chain>
  </Lower>
);

const HelpPanel = () => (
  <Help>
    <HelpHead>
      <svg width="9" height="9" viewBox="0 0 18 18">
        <circle cx="9" cy="9" r="8" fill="none" stroke="#222" strokeWidth="1.600" />
        <path d="M5 5l8 8M13 5l-8 8" stroke="#222" strokeWidth="1.800" />
      </svg>
      Administración de archivos
    </HelpHead>
    <HelpBody>
      <HelpBlock>
        El Administrador de archivos ayuda a<br />todos los archivos con los que trabaja
        <br />muestras, películas, presets, Live Clip<br />Sets.
      </HelpBlock>
      <HelpBlock>
        El actual Live Set todavía no se ha gua
        <Pill $w={86} $line>Administrar Set</Pill>
      </HelpBlock>
      <HelpBlock>
        Este Live Set pertenece al <a href="#proyecto">Proyecto</a> T
        <Pill $w={86} $line>Administrar Proyecto</Pill>
      </HelpBlock>
      <HelpBlock $last>
        La Librería del usuario es la ubicación<br />defecto para guardar presets, groove
        <br />archivos.
        <Pill $w={86} $line>ninistrar Librería del usua</Pill>
      </HelpBlock>
    </HelpBody>
  </Help>
);

const App = () => {
  const [menu] = useState(["dición", "Crear", "Ver", "Opciones", "Ayuda"]);

  return (
    <Shell>
      <GlobalStyle />
      <Menu>
        {menu.map((m) => (
          <button key={m}>{m}</button>
        ))}
      </Menu>
      <Bar />
      <Body>
        <Work>
          <Upper>
            <FileBrowser />
            <Arrangement />
          </Upper>
          <Devices />
          <Status>
            <StatusText>nces Marco 1.1.1 (Tiempo: 0:00)</StatusText>
            <MiniClip viewBox="18 330 1458 150" preserveAspectRatio="none">
              <Notes />
              <path d="M920 320v180" stroke="#111" strokeWidth="10" />
            </MiniClip>
            <MiniTab>
              1-Grand Piano
              <svg width="24" height="8" viewBox="0 0 24 8">
                <path d="M0 0h8v8H0z" fill="#d8d0a0" />
                <path d="M10 0h14v8H10z" fill="#c4c4c4" />
              </svg>
            </MiniTab>
            <MiniRound />
          </Status>
        </Work>
        <HelpPanel />
      </Body>
    </Shell>
  );
};

export default App;
